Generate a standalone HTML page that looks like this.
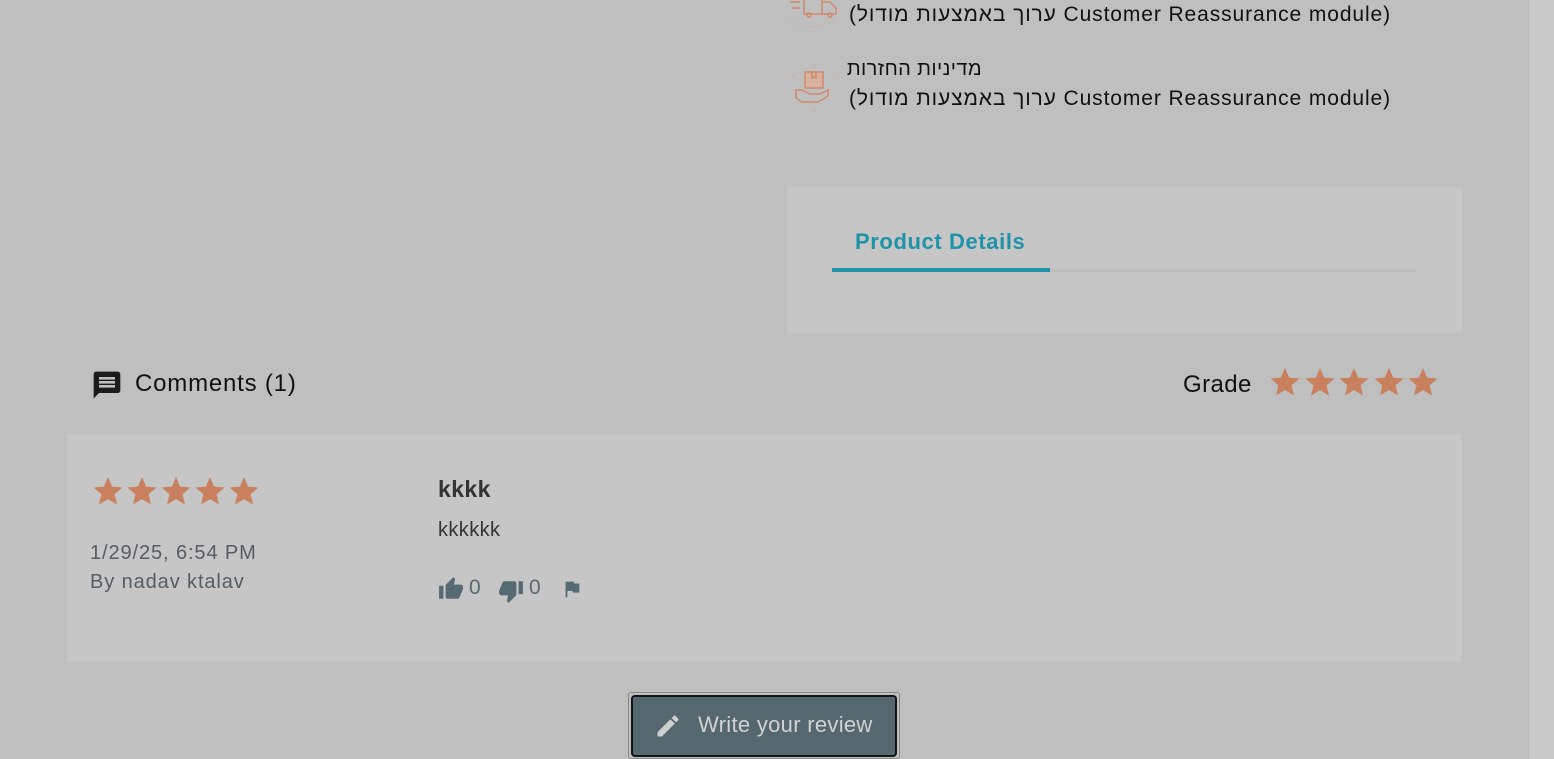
<!DOCTYPE html>
<html><head><meta charset="utf-8"><style>
body{margin:0;width:1554px;height:759px;background:#bfbfbf;font-family:"Liberation Sans","Noto Sans CJK SC",sans-serif;position:relative;overflow:hidden;color:#111;letter-spacing:0.4px}
.abs{position:absolute}
.star{fill:#c9805f}
.mod{direction:ltr;font-size:21px;white-space:nowrap;letter-spacing:0.9px;left:849px}
</style></head><body>
<div class="abs" style="left:1529px;top:0;width:25px;height:759px;background:#c9c9c9"></div>

<svg class="abs" style="left:786px;top:0" width="56" height="30" viewBox="0 0 56 30" fill="none" stroke="#d08a6a" stroke-width="1.5"><rect x="18" y="-6" width="18" height="20"/><path d="M36 2h8l6 6v6H36"/><circle cx="23" cy="15" r="2"/><circle cx="44" cy="15" r="2"/><path d="M4 2h10M6 8h8" /><path d="M4 20q20 14 44 0" stroke-dasharray="2 3" stroke="#ccb0a0"/></svg>
<div class="abs mod" style="top:3px">(ערוך באמצעות מודול Customer Reassurance module)</div>

<svg class="abs" style="left:788px;top:62px" width="52" height="52" viewBox="0 0 52 52" fill="none" stroke="#d08a6a" stroke-width="1.5"><rect x="17" y="10" width="18" height="16" fill="#d9b2a0"/><path d="M24 10v6l2-1 2 1v-6"/><path d="M8 28h6l8 4h10l8-4v6l-10 6H14l-6-4z"/><path d="M26 2v4M4 14l3 2M48 14l-3 2M26 46v4" stroke="#ccb0a0"/></svg>
<div class="abs" style="left:848px;top:58px;font-size:20px;direction:rtl;width:134px;text-align:right;white-space:nowrap">מדיניות החזרות</div>
<div class="abs mod" style="top:87px">(ערוך באמצעות מודול Customer Reassurance module)</div>

<div class="abs" style="left:787px;top:187px;width:675px;height:146px;background:#c6c6c6"></div>
<div class="abs" style="left:855px;top:229px;font-size:22px;font-weight:bold;color:#1f93a8;letter-spacing:0.6px">Product Details</div>
<div class="abs" style="left:832px;top:269px;width:584px;height:3px;background:#bdbdbd"></div>
<div class="abs" style="left:832px;top:268px;width:218px;height:4px;background:#1f93a8"></div>

<svg class="abs" style="left:91px;top:369px" width="32" height="32" viewBox="0 0 24 24"><path fill="#1b1b1b" d="M20 2H4c-1.1 0-2 .9-2 2v18l4-4h14c1.1 0 2-.9 2-2V4c0-1.1-.9-2-2-2zm-2 12H6v-2h12v2zm0-3H6V9h12v2zm0-3H6V6h12v2z"/></svg>
<div class="abs" style="left:135px;top:370px;font-size:24px;letter-spacing:0.8px">Comments (1)</div>
<div class="abs" style="left:1183px;top:371px;font-size:24px">Grade</div>
<svg class="abs" style="left:1270px;top:367px" width="170" height="32" viewBox="0 0 170 32">
<defs><path id="s" d="M15 1l4.1 9.6 10.4.9-7.9 6.8 2.4 10.2L15 23.1l-9 5.4 2.4-10.2-7.9-6.8 10.4-.9z"/></defs>
<use href="#s" class="star" x="0"/><use href="#s" class="star" x="35"/><use href="#s" class="star" x="69"/><use href="#s" class="star" x="104"/><use href="#s" class="star" x="138"/></svg>

<div class="abs" style="left:67px;top:434px;width:1395px;height:228px;background:#c6c6c6"></div>
<svg class="abs" style="left:93px;top:476px" width="170" height="32" viewBox="0 0 170 32">
<use href="#s" class="star" x="0"/><use href="#s" class="star" x="34"/><use href="#s" class="star" x="68"/><use href="#s" class="star" x="102"/><use href="#s" class="star" x="136"/></svg>
<div class="abs" style="left:90px;top:539px;font-size:20px;color:#555d62;line-height:29px;letter-spacing:0.9px">1/29/25, 6:54 PM<br>By nadav ktalav</div>
<div class="abs" style="left:438px;top:476px;font-size:23px;font-weight:bold;color:#333">kkkk</div>
<div class="abs" style="left:438px;top:519px;font-size:20px;color:#333">kkkkkk</div>
<svg class="abs" style="left:438px;top:576px" width="26" height="26" viewBox="0 0 24 24"><path fill="#556a72" d="M1 21h4V9H1v12zm22-11c0-1.1-.9-2-2-2h-6.3l1-4.6v-.3c0-.4-.2-.8-.4-1.1L14.2 1 7.6 7.6C7.2 7.9 7 8.4 7 9v10c0 1.1.9 2 2 2h9c.8 0 1.5-.5 1.8-1.2l3-7.1c.1-.2.2-.5.2-.7v-2z"/></svg>
<div class="abs" style="left:469px;top:576px;font-size:21px;color:#556a72">0</div>
<svg class="abs" style="left:498px;top:578px" width="26" height="26" viewBox="0 0 24 24"><path fill="#556a72" d="M15 3H6c-.8 0-1.5.5-1.8 1.2l-3 7.1c-.1.2-.2.5-.2.7v2c0 1.1.9 2 2 2h6.3l-1 4.6v.3c0 .4.2.8.4 1.1L9.8 23l6.6-6.6c.4-.4.6-.9.6-1.4V5c0-1.1-.9-2-2-2zm4 0v12h4V3h-4z"/></svg>
<div class="abs" style="left:529px;top:576px;font-size:21px;color:#556a72">0</div>
<svg class="abs" style="left:561px;top:578px" width="22" height="22" viewBox="0 0 24 24"><path fill="#556a72" d="M14.4 6L14 4H5v17h2v-7h5.6l.4 2h7V6z"/></svg>

<div class="abs" style="left:628px;top:692px;width:272px;height:67px;border:1px solid #888;border-radius:3px;box-sizing:border-box"></div>
<div class="abs" style="left:631px;top:695px;width:266px;height:62px;background:#55686f;border:2px solid #141414;border-radius:4px;box-sizing:border-box"></div>
<svg class="abs" style="left:654px;top:712px" width="28" height="28" viewBox="0 0 24 24"><path fill="#cfcfcf" d="M3 17.25V21h3.75L17.81 9.94l-3.75-3.75L3 17.25zM20.71 7.04a1 1 0 000-1.41l-2.34-2.34a1 1 0 00-1.41 0l-1.83 1.83 3.75 3.75 1.83-1.83z"/></svg>
<div class="abs" style="left:698px;top:712px;font-size:22px;color:#d2d2d2;letter-spacing:0.3px">Write your review</div>
</body></html>
